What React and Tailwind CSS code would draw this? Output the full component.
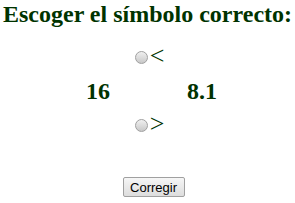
export default function App() {
  return (
    <div className="w-[295px] h-[203px] bg-white text-[#003300] font-['Liberation_Serif',serif]">
      <h1 className="text-[24px] font-bold leading-[28px] pl-[3px]">Escoger el símbolo correcto:</h1>
      <div className="flex flex-col items-center mt-[19px]">
        <label className="flex items-center h-[20px] pl-[4px]">
          <span className="w-[13px] h-[13px] rounded-full border border-[#a0a0a0] bg-gradient-to-b from-[#f0f0f0] to-[#c8c8c8]"></span>
          <span className="text-[26px] leading-none ml-[2px] -mt-[2px]">&lt;</span>
        </label>
      </div>
      <div className="flex mt-[11px] h-[26px] items-center text-[24px] font-bold pl-[86px] gap-[77px]">
        <span>16</span>
        <span>8.1</span>
      </div>
      <div className="flex flex-col items-center mt-[11px]">
        <label className="flex items-center h-[20px] pl-[4px]">
          <span className="w-[13px] h-[13px] rounded-full border border-[#a0a0a0] bg-gradient-to-b from-[#f0f0f0] to-[#c8c8c8]"></span>
          <span className="text-[26px] leading-none ml-[2px] -mt-[2px]">&gt;</span>
        </label>
      </div>
      <div className="flex justify-center mt-[42px] pl-[12px]">
        <button className="w-[62px] h-[20px] border border-[#a0a0a0] rounded-[2px] bg-gradient-to-b from-[#f6f6f6] to-[#dddddd] text-[13px] text-black font-['Liberation_Sans',sans-serif] leading-none">Corregir</button>
      </div>
    </div>
  );
}
